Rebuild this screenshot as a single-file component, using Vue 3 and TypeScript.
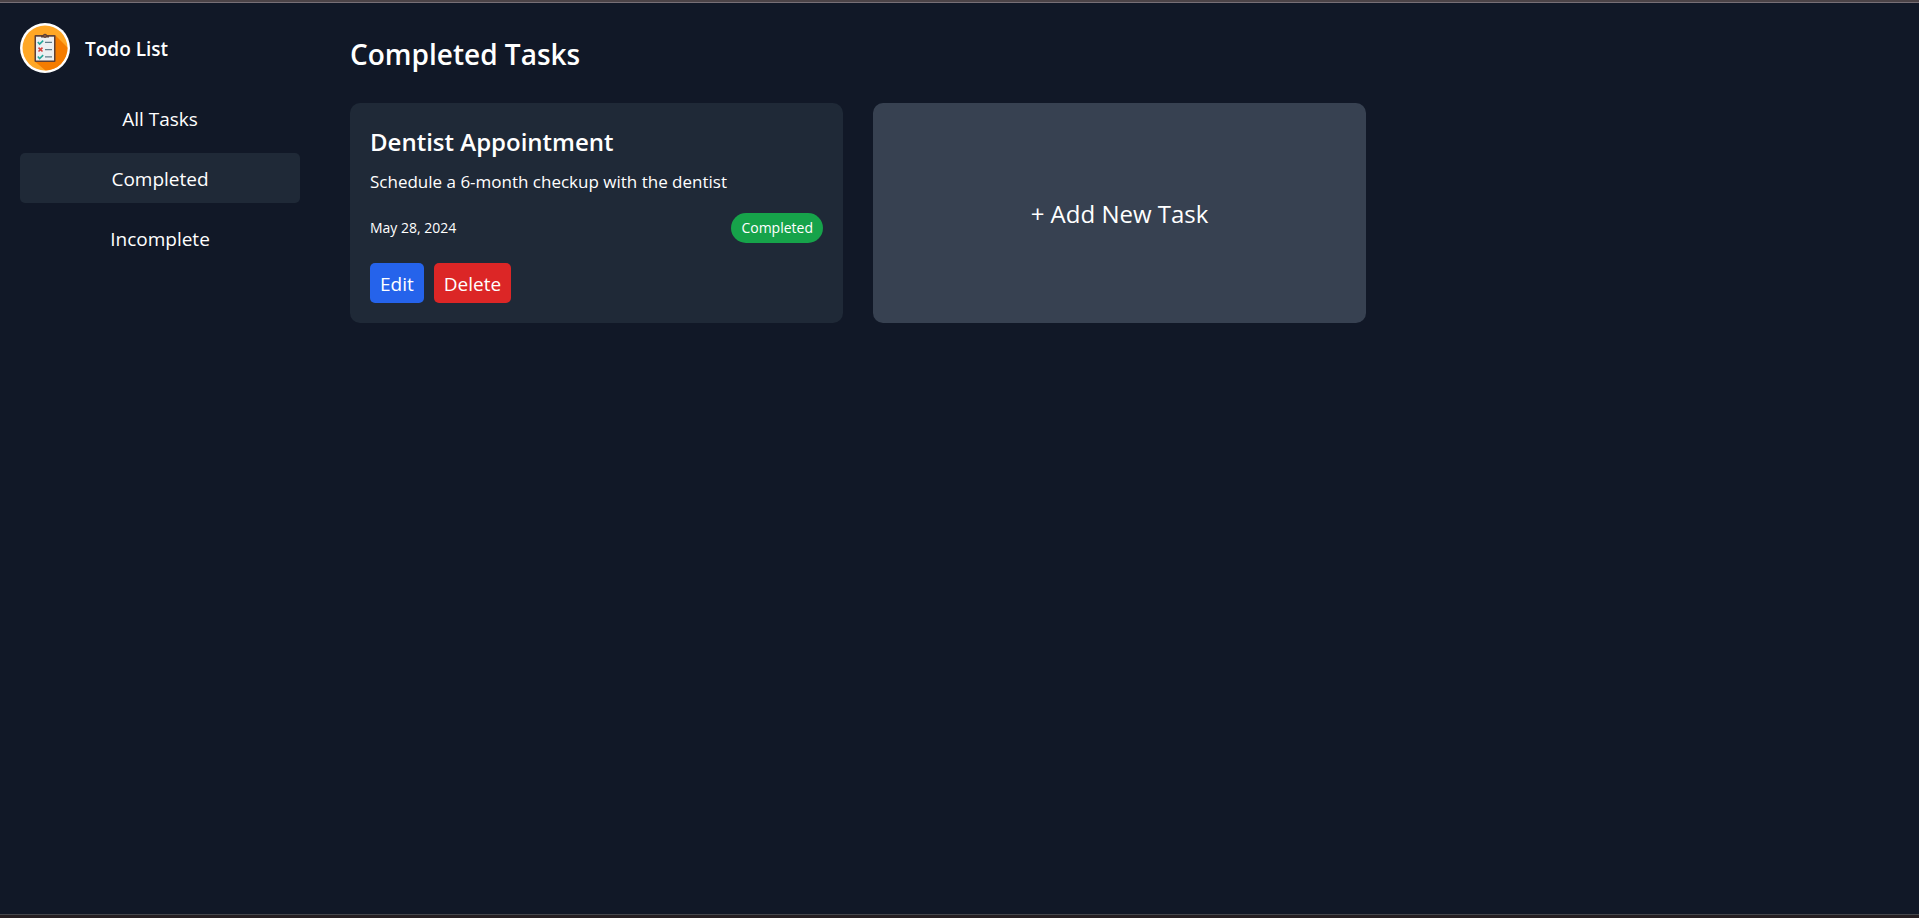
<script setup lang="ts">
import { computed, ref } from 'vue'

type Filter = 'all' | 'completed' | 'incomplete'

interface Task {
  id: number
  title: string
  description: string
  date: string
  completed: boolean
}

const filters: { key: Filter; label: string; heading: string }[] = [
  { key: 'all', label: 'All Tasks', heading: 'All Tasks' },
  { key: 'completed', label: 'Completed', heading: 'Completed Tasks' },
  { key: 'incomplete', label: 'Incomplete', heading: 'Incomplete Tasks' },
]

const active = ref<Filter>('completed')

const tasks = ref<Task[]>([
  {
    id: 1,
    title: 'Dentist Appointment',
    description: 'Schedule a 6-month checkup with the dentist',
    date: 'May 28, 2024',
    completed: true,
  },
])

const heading = computed(() => filters.find((f) => f.key === active.value)?.heading)

const visibleTasks = computed(() =>
  tasks.value.filter((t) => active.value === 'all' || t.completed === (active.value === 'completed')),
)

function removeTask(id: number) {
  tasks.value = tasks.value.filter((t) => t.id !== id)
}
</script>

<template>
  <div class="app">
    <div class="edge-top"></div>
    <div class="layout">
      <aside class="sidebar">
        <div class="brand">
          <svg class="logo" viewBox="0 0 50 50" aria-hidden="true">
            <defs>
              <clipPath id="disc"><circle cx="25" cy="25" r="22.5" /></clipPath>
            </defs>
            <circle cx="25" cy="25" r="25" fill="#fff" />
            <circle cx="25" cy="25" r="22.5" fill="#ffa726" />
            <path d="M35 12 L60 37 L40 60 L15 38.500 Z" fill="#f57c00" clip-path="url(#disc)" />
            <rect x="14.500" y="12" width="21" height="27" rx="1" fill="#5d4037" />
            <rect x="16" y="13.700" width="18" height="23.800" fill="#eceff1" />
            <path d="M21 14.500 V13 H23 A2 2 0 0 1 27 13 H29 V14.500 Z" fill="#5d4037" />
            <circle cx="25" cy="12.800" r="1.600" fill="#8d5a3c" stroke="#5d4037" />
            <g fill="none" stroke-width="1.600">
              <path
                d="M17.800 19 L19.600 21 L23.200 17.600 M17.800 33.500 L19.600 35.500 L23.200 32.100"
                stroke="#26a69a"
              />
              <path d="M18.500 24.700 L22.500 28.500 M22.500 24.700 L18.500 28.500" stroke="#d9403a" />
              <path d="M25 19.300 H32 M25 26.600 H32 M25 33.900 H32" stroke="#607d8b" stroke-width="1.200" />
            </g>
          </svg>
          <span class="brand-name">Todo List</span>
        </div>
        <nav class="nav">
          <button
            v-for="f in filters"
            :key="f.key"
            type="button"
            class="nav-item"
            :class="{ active: f.key === active }"
            @click="active = f.key"
          >
            {{ f.label }}
          </button>
        </nav>
      </aside>

      <main class="main">
        <h1 class="heading">{{ heading }}</h1>
        <div class="grid">
          <article v-for="task in visibleTasks" :key="task.id" class="card">
            <h2 class="title">{{ task.title }}</h2>
            <p class="description">{{ task.description }}</p>
            <div class="meta">
              <time class="date">{{ task.date }}</time>
              <span class="badge" :class="{ pending: !task.completed }">{{
                task.completed ? 'Completed' : 'Incomplete'
              }}</span>
            </div>
            <div class="actions">
              <button type="button" class="action edit">Edit</button>
              <button type="button" class="action delete" @click="removeTask(task.id)">Delete</button>
            </div>
          </article>
          <button type="button" class="add">+ Add New Task</button>
        </div>
      </main>
    </div>
    <div class="edge-bottom"></div>
  </div>
</template>

<style>
body {
  margin: 0;
  background: #111827;
}
</style>

<style scoped>
.app {
  display: flex;
  flex-direction: column;
  min-height: 100vh;
  background: #111827;
  color: #fff;
  font-family: 'Segoe UI', 'Open Sans', 'Noto Sans', sans-serif;
  font-size: 19px;
  line-height: 30px;
}

.edge-top {
  height: 2px;
  border-bottom: 1px solid #776f76;
  background: #4b4347;
}

.edge-bottom {
  height: 3px;
  border-top: 1px solid #45474c;
  background: #261f22;
}

.layout {
  flex: 1;
  display: flex;
}

button {
  margin: 0;
  border: 0;
  color: inherit;
  font: inherit;
  cursor: pointer;
}

.sidebar {
  box-sizing: border-box;
  flex: 0 0 320px;
  padding: 20px;
}

.brand {
  display: flex;
  align-items: center;
  gap: 15px;
  margin-bottom: 20px;
}

.logo {
  width: 50px;
  height: 50px;
}

.brand-name {
  padding-top: 2px;
  font-weight: 600;
}

.nav {
  display: flex;
  flex-direction: column;
  gap: 10px;
}

.nav-item {
  padding: 11px 10px 9px;
  border-radius: 5px;
  background: transparent;
}

.nav-item.active {
  background: #1f2937;
}

.main {
  flex: 1;
  min-width: 0;
  padding: 30px;
}

.heading {
  margin: 0 0 28px;
  font-size: 28px;
  font-weight: 600;
  line-height: 42px;
}

.grid {
  display: grid;
  grid-template-columns: repeat(3, minmax(0, 1fr));
  gap: 30px;
}

.card {
  padding: 20px;
  border-radius: 10px;
  background: #1f2937;
}

.title {
  margin: 0 0 8px;
  font-size: 24px;
  font-weight: 600;
  line-height: 38px;
}

.description {
  margin: 0 0 18px;
  font-size: 17px;
  line-height: 26px;
}

.meta {
  display: flex;
  align-items: center;
  justify-content: space-between;
  margin-bottom: 20px;
  font-size: 14px;
  line-height: 20px;
}

.badge {
  padding: 5px 10px;
  border-radius: 15px;
  background: #16a34a;
}

.badge.pending {
  background: #dc2626;
}

.actions {
  display: flex;
  gap: 10px;
}

.action {
  padding: 6px 10px 4px;
  border-radius: 5px;
}

.edit {
  background: #2563eb;
}

.delete {
  background: #dc2626;
}

.add {
  padding: 2px 10px 0;
  border-radius: 10px;
  background: #374151;
  font-size: 24px;
}
</style>
